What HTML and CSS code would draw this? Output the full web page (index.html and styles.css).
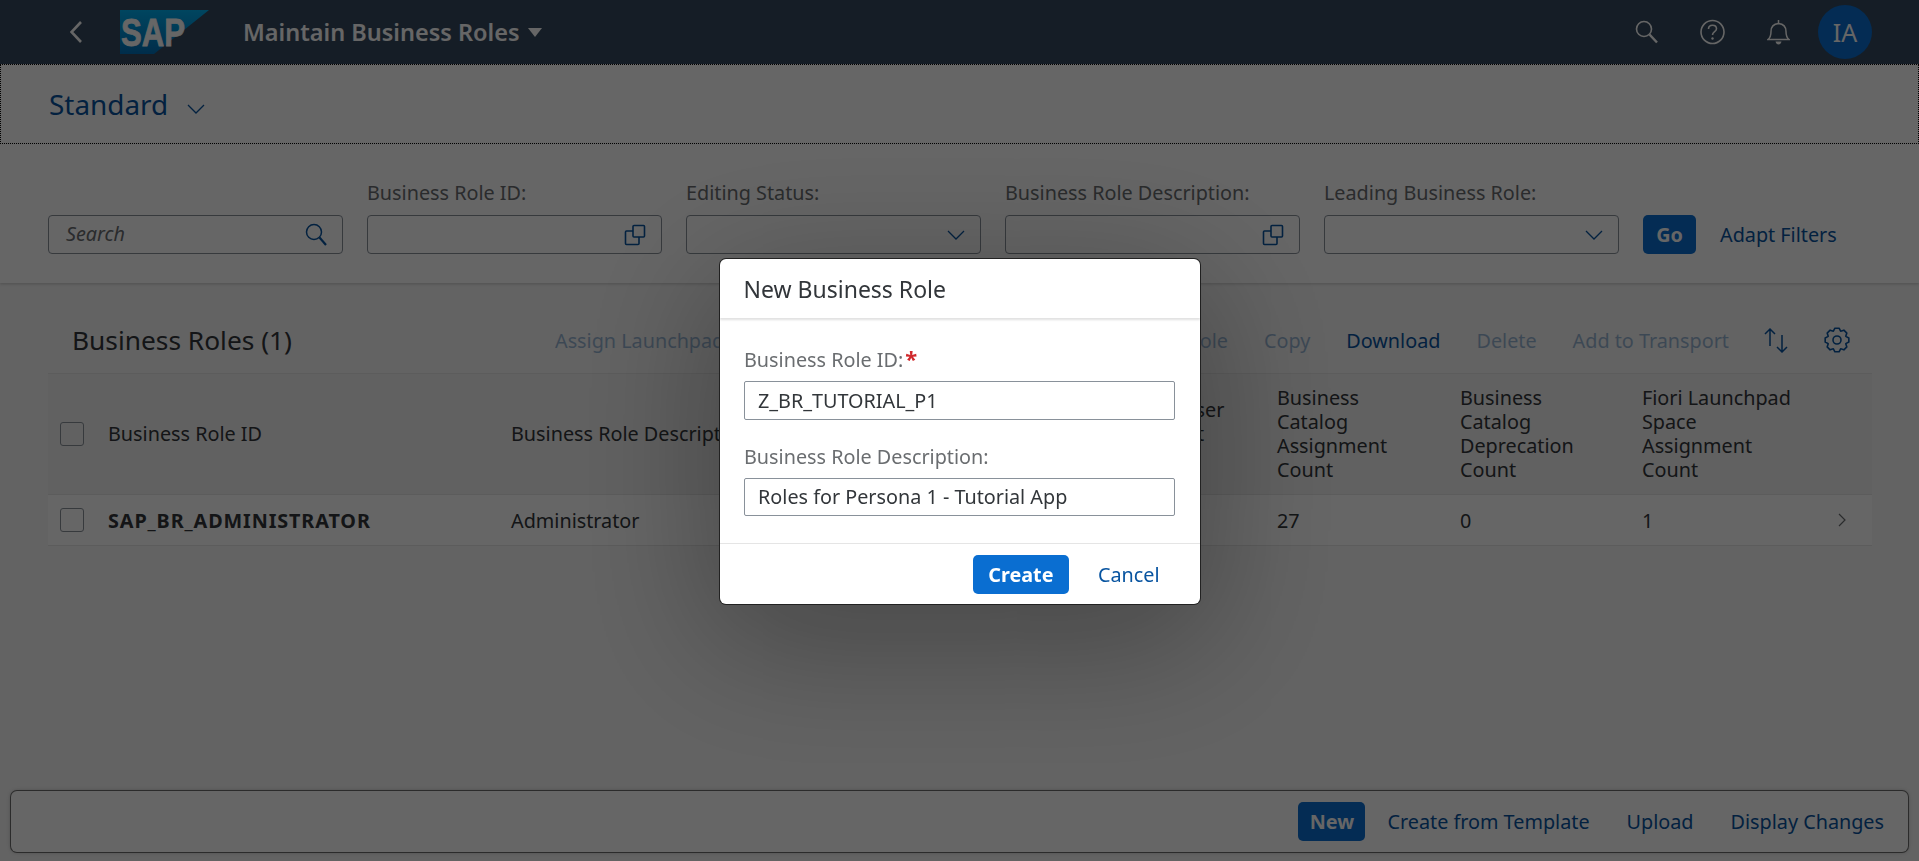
FILE: index.html
```html
<!DOCTYPE html>
<html lang="en">
<head>
    <meta charset="UTF-8">
    <meta name="viewport" content="width=device-width, initial-scale=1.0">
    <title>Maintain Business Roles</title>
    <link rel="stylesheet" href="styles.css">
</head>
<body>

    <header class="shell">
        <svg class="back-icon" width="12" height="22" viewBox="0 0 12 22"><path d="M11 1 1.500 11 11 21" fill="none" stroke="#fff" stroke-width="2.600"/></svg>
        <svg class="logo" width="90" height="44" viewBox="0 0 90 44">
            <defs>
                <linearGradient id="logoBlue" x1="0" y1="0" x2="0" y2="1">
                    <stop offset="0" stop-color="#00aeef"/>
                    <stop offset="1" stop-color="#0070b9"/>
                </linearGradient>
            </defs>
            <polygon points="0,0 89,0 34,44 0,44" fill="url(#logoBlue)"/>
            <text x="1" y="36" class="logo-text" textLength="64" lengthAdjust="spacingAndGlyphs">SAP</text>
        </svg>
        <span class="shell-title">Maintain Business Roles</span>
        <svg class="title-caret" width="14" height="9" viewBox="0 0 14 9"><polygon points="0,0 14,0 7,9" fill="#fff"/></svg>
        <div class="shell-actions">
            <svg width="23" height="24" viewBox="0 0 23 24"><circle cx="9" cy="9" r="7.500" fill="none" stroke="#fff" stroke-width="1.600"/><path d="M14.500 14.500 22 22.500" stroke="#fff" stroke-width="2.400"/></svg>
            <svg width="25" height="26" viewBox="0 0 25 26"><circle cx="12.500" cy="13" r="11.500" fill="none" stroke="#fff" stroke-width="1.600"/><path d="M8.500 10c0-2.400 1.800-3.800 4-3.800s4 1.400 4 3.500c0 3-4 3-4 6.300" fill="none" stroke="#fff" stroke-width="1.600"/><circle cx="12.500" cy="19.500" r="1.200" fill="#fff"/></svg>
            <svg width="23" height="26" viewBox="0 0 23 26"><path d="M1 20.500h21c-2.500-2-3-4-3-8 0-4.500-2.500-7.500-7.500-8-5 .5-7.500 3.500-7.500 8 0 4-.5 6-3 8z" fill="none" stroke="#fff" stroke-width="1.500"/><path d="M11.500 1v3" stroke="#fff" stroke-width="1.500"/><path d="M8.500 22.500c.5 2 1.500 3 3 3s2.500-1 3-3z" fill="#fff"/></svg>
            <div class="avatar">IA</div>
        </div>
    </header>

    <div class="variant-bar">
        <span class="variant-name">Standard</span>
        <svg class="variant-caret" width="18" height="10" viewBox="0 0 18 10"><path d="M1 1 9 9 17 1" fill="none" stroke="#0854a0" stroke-width="1.300"/></svg>
    </div>

    <section class="filter-bar">
        <div class="filter">
            <div class="field italic">
                <span>Search</span>
                <svg width="22" height="23" viewBox="0 0 22 23"><circle cx="9" cy="9" r="7.500" fill="none" stroke="#0854a0" stroke-width="1.500"/><path d="M14.500 14.500 21 22" stroke="#0854a0" stroke-width="2.200"/></svg>
            </div>
        </div>
        <div class="filter">
            <label>Business Role ID:</label>
            <div class="field">
                <span></span>
                <svg width="22" height="22" viewBox="0 0 22 22"><use href="#valueHelp"/></svg>
            </div>
        </div>
        <div class="filter">
            <label>Editing Status:</label>
            <div class="field">
                <span></span>
                <svg width="18" height="10" viewBox="0 0 18 10"><use href="#chevron"/></svg>
            </div>
        </div>
        <div class="filter">
            <label>Business Role Description:</label>
            <div class="field">
                <span></span>
                <svg width="22" height="22" viewBox="0 0 22 22"><use href="#valueHelp"/></svg>
            </div>
        </div>
        <div class="filter">
            <label>Leading Business Role:</label>
            <div class="field">
                <span></span>
                <svg width="18" height="10" viewBox="0 0 18 10"><use href="#chevron"/></svg>
            </div>
        </div>
        <button class="btn-primary go-btn">Go</button>
        <a class="link adapt-link">Adapt Filters</a>
    </section>

    <section class="table-section">
        <div class="table-toolbar">
            <h2>Business Roles (1)</h2>
            <div class="toolbar-actions">
                <a class="link disabled assign">Assign Launchpad Space</a>
                <a class="link disabled">Assign Role</a>
                <a class="link disabled">Copy</a>
                <a class="link">Download</a>
                <a class="link disabled">Delete</a>
                <a class="link disabled">Add to Transport</a>
                <svg class="sort-icon" width="26" height="26" viewBox="0 0 26 26"><path d="M6 19V2M1 7l5-5 5 5M18 8v17M13 20l5 5 5-5" fill="none" stroke="#0854a0" stroke-width="1.500"/></svg>
                <svg width="26" height="26" viewBox="0 0 26 26"><circle cx="13" cy="13" r="4" fill="none" stroke="#0854a0" stroke-width="1.600"/><path d="M10.920 1.180H15.080L16.640 4.220 19.880 3.170 22.830 6.120 21.780 9.360 24.820 10.920V15.080L21.780 16.640 22.830 19.880 19.880 22.830 16.640 21.780 15.080 24.820H10.920L9.360 21.780 6.120 22.830 3.170 19.880 4.220 16.640 1.180 15.080V10.920L4.220 9.360 3.170 6.120 6.120 3.170 9.360 4.220z" fill="none" stroke="#0854a0" stroke-width="1.600" stroke-linejoin="round"/></svg>
            </div>
        </div>
        <div class="table-row table-head">
            <div class="cell"><span class="checkbox"></span></div>
            <div class="cell">Business Role ID</div>
            <div class="cell">Business Role Description</div>
            <div class="cell">Leading Business Role</div>
            <div class="cell">Business User<br>Assignment<br>Count</div>
            <div class="cell">Business<br>Catalog<br>Assignment<br>Count</div>
            <div class="cell">Business<br>Catalog<br>Deprecation<br>Count</div>
            <div class="cell">Fiori Launchpad<br>Space<br>Assignment<br>Count</div>
            <div class="cell"></div>
        </div>
        <div class="table-row table-body">
            <div class="cell"><span class="checkbox"></span></div>
            <div class="cell strong">SAP_BR_ADMINISTRATOR</div>
            <div class="cell">Administrator</div>
            <div class="cell"></div>
            <div class="cell"></div>
            <div class="cell">27</div>
            <div class="cell">0</div>
            <div class="cell">1</div>
            <div class="cell"><svg width="8" height="14" viewBox="0 0 8 14"><path d="M1 1 7 7 1 13" fill="none" stroke="#6a6d70" stroke-width="1.200"/></svg></div>
        </div>
    </section>

    <footer class="footer-bar">
        <button class="btn-primary new-btn">New</button>
        <a class="link">Create from Template</a>
        <a class="link">Upload</a>
        <a class="link">Display Changes</a>
    </footer>

    <svg class="icon-defs" width="0" height="0">
        <symbol id="valueHelp" viewBox="0 0 22 22">
            <path d="M9 7H2.500a1 1 0 0 0-1 1v11.500a1 1 0 0 0 1 1H14a1 1 0 0 0 1-1V13" fill="none" stroke="#0854a0" stroke-width="1.600"/>
            <rect x="9" y="1.500" width="11.500" height="11.500" rx="1" fill="none" stroke="#0854a0" stroke-width="1.600"/>
        </symbol>
        <symbol id="chevron" viewBox="0 0 18 10">
            <path d="M1 1 9 9 17 1" fill="none" stroke="#0854a0" stroke-width="1.300"/>
        </symbol>
    </svg>

    <div class="block-layer">
        <div class="dialog">
            <div class="dialog-head">New Business Role</div>
            <div class="dialog-body">
                <label>Business Role ID:<span class="required">*</span></label>
                <div class="dialog-input">Z_BR_TUTORIAL_P1</div>
                <label>Business Role Description:</label>
                <div class="dialog-input">Roles for Persona 1 - Tutorial App</div>
            </div>
            <div class="dialog-foot">
                <button class="btn-primary create-btn">Create</button>
                <a class="link cancel-link">Cancel</a>
            </div>
        </div>
    </div>

</body>
</html>
```

FILE: styles.css
```css
* { box-sizing: border-box; }
html, body { height: 100%; }
body { margin: 0; height: 861px; overflow: hidden; background-color: #f7f7f7; font-family: "Noto Sans", Arial, sans-serif; font-size: 19.8px; color: #32363a; display: flex; flex-direction: column; }

.shell { height: 64px; flex: none; background-color: #354a5f; color: #fff; display: flex; align-items: center; padding-left: 70px; }
.back-icon { margin-right: 38px; }
.logo-text { font-family: "Liberation Sans", Arial, sans-serif; font-weight: 700; font-size: 38px; fill: #fff; stroke: #fff; stroke-width: .8px; }
.logo { margin-right: 33px; }
.shell-title { font-size: 23.500px; font-weight: 600; }
.title-caret { margin-left: 8px; }
.shell-actions { margin-left: auto; display: flex; align-items: center; gap: 42px; padding-right: 47px; }
.avatar { width: 54px; height: 54px; border-radius: 50%; background-color: #0a6ed1; font-size: 25px; display: flex; align-items: center; justify-content: center; margin-left: -14px; }

.variant-bar { height: 80px; flex: none; background-color: #fff; outline: 1px dotted #000; outline-offset: -1px; display: flex; align-items: center; padding-left: 49px; }
.variant-name { font-size: 27.900px; color: #0854a0; }
.variant-caret { margin: 10px 0 0 19px; }

.filter-bar { height: 139px; flex: none; background-color: #fff; box-shadow: 0 1px 3px rgba(0, 0, 0, .2); display: flex; align-items: flex-end; padding: 0 0 29px 48px; position: relative; }
.filter { width: 295px; margin-right: 24px; }
.filter label { display: block; color: #6a6d70; margin-bottom: 9px; white-space: nowrap; }
.field { height: 39px; border: 1px solid #89919a; border-radius: 4px; display: flex; align-items: center; justify-content: space-between; padding: 0 15px 0 17px; color: #6a6d70; }
.field span { margin-top: -2px; }
.italic { font-style: italic; }
.btn-primary { height: 39px; border: none; border-radius: 5px; background-color: #0a6ed1; color: #fff; font-family: inherit; font-size: 19.800px; font-weight: 700; padding: 0; }
.go-btn { width: 53px; }
.link { color: #0854a0; white-space: nowrap; }
.adapt-link { margin: 0 0 6px 24px; }

.table-section { flex: none; padding: 0 47px 0 48px; }
.table-toolbar { height: 91px; display: flex; align-items: center; padding: 24px 22px 0 24px; border-bottom: 1px solid #e5e5e5; }
.table-toolbar h2 { margin: 0; width: 483px; flex: none; font-size: 26.300px; font-weight: 400; }
.toolbar-actions { flex: 1; display: flex; align-items: center; gap: 36px; }
.assign { margin-right: auto; }
.sort-icon { margin: 0 -1.500px; }
.disabled { opacity: .4; }
.table-row { display: grid; grid-template-columns: 60px 403px 300px 283px 183px 183px 182px 196px 34px; border-bottom: 1px solid #e5e5e5; }
.table-head { height: 121px; background-color: #f2f2f2; line-height: 24px; }
.table-body { height: 51px; background-color: #fff; }
.cell { display: flex; flex-wrap: wrap; align-content: center; align-items: center; white-space: nowrap; }
.table-head .cell { display: block; align-self: center; }
.table-head .cell:first-child { display: flex; }
.cell:first-child { padding-left: 12px; }
.strong { font-weight: 700; letter-spacing: .9px; }
.checkbox { width: 24px; height: 24px; border: 1px solid #89919a; border-radius: 3px; }

.footer-bar { position: absolute; left: 11px; right: 11px; top: 791px; height: 61px; background-color: #fff; border-radius: 6px; box-shadow: 0 0 0 1px rgba(0, 0, 0, .5), 0 0 4px rgba(0, 0, 0, .3); display: flex; align-items: center; justify-content: flex-end; gap: 37px; padding-right: 24px; }
.new-btn { width: 67px; margin-right: -15px; }

.icon-defs { position: absolute; }

.block-layer { position: fixed; inset: 0; background-color: rgba(0, 0, 0, .6); display: flex; align-items: center; justify-content: center; }
.dialog { width: 480px; height: 345px; margin-top: 2px; background-color: #fff; border-radius: 6px; box-shadow: 0 0 0 1px #222, 0 30px 140px 10px rgba(0, 0, 0, .3); display: flex; flex-direction: column; }
.dialog-head { height: 59px; flex: none; padding-left: 24px; display: flex; align-items: center; font-size: 23px; box-shadow: 0 2px 2px rgba(0, 0, 0, .12); }
.dialog-body { flex: 1; padding: 30px 24.500px 0; border-bottom: 1px solid #e5e5e5; }
.dialog-body label { display: block; color: #6a6d70; line-height: 24px; margin-bottom: 9px; }
.required { color: #d0282c; font-size: 22px; font-weight: 700; margin-left: 2px; line-height: 20px; }
.dialog-input { height: 38.500px; border: 1px solid #89919a; border-radius: 2px; display: flex; align-items: center; padding-left: 13px; margin-bottom: 25px; }
.dialog-foot { height: 60px; flex: none; display: flex; align-items: center; justify-content: flex-end; padding-right: 40px; }
.create-btn { width: 96px; }
.cancel-link { margin-left: 29px; }
```
